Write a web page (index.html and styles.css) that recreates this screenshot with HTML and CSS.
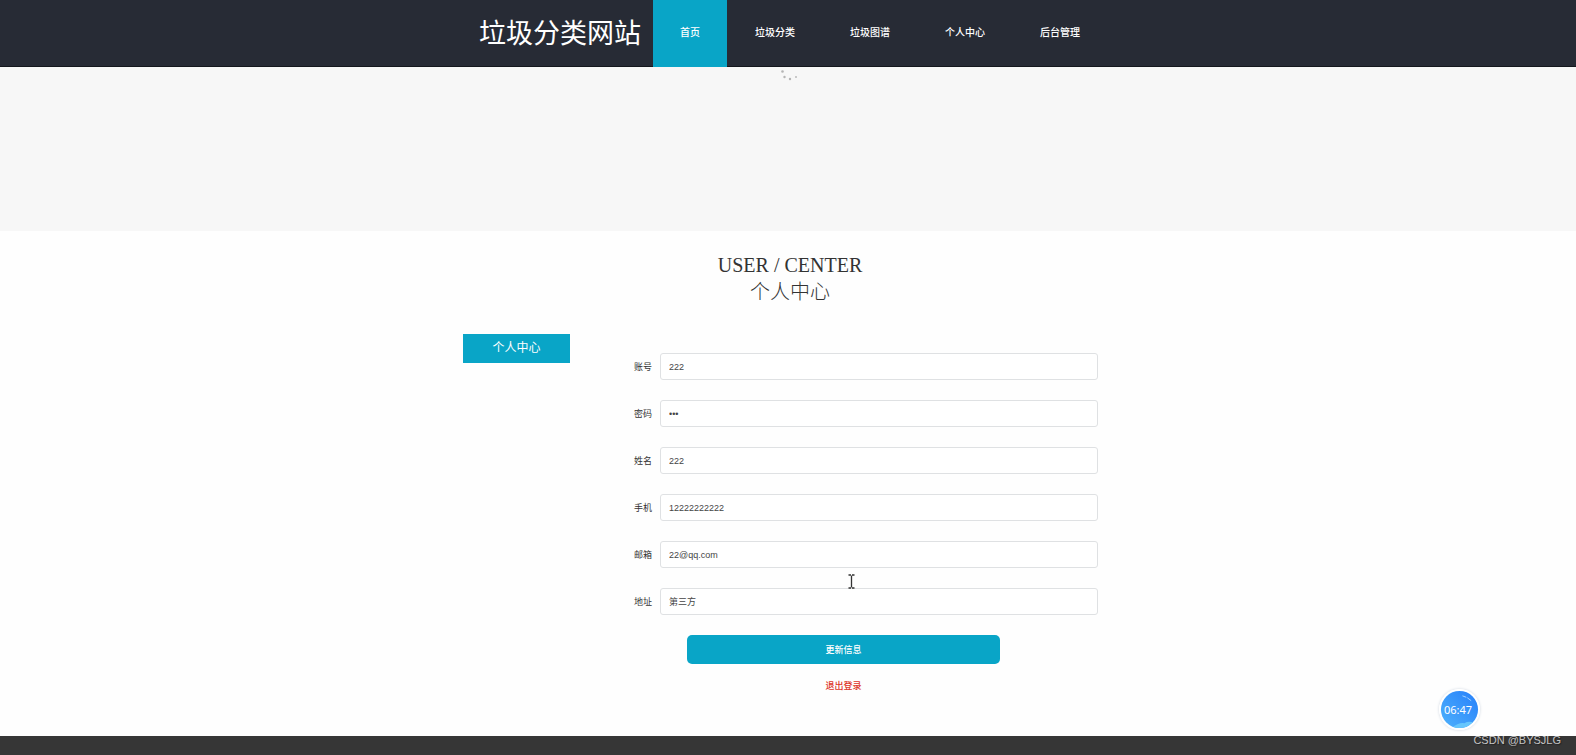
FILE: index.html
```html
<!DOCTYPE html>
<html lang="zh-CN">
<head>
<meta charset="utf-8">
<meta name="viewport" content="width=device-width, initial-scale=1">
<title>个人中心</title>
<link rel="stylesheet" href="styles.css">
</head>
<body>
<header class="header">
  <div class="container header-inner">
    <a class="logo" href="#">垃圾分类网站</a>
    <nav class="nav">
      <a class="nav-item active" href="#">首页</a>
      <a class="nav-item" href="#">垃圾分类</a>
      <a class="nav-item" href="#">垃圾图谱</a>
      <a class="nav-item" href="#">个人中心</a>
      <a class="nav-item" href="#">后台管理</a>
    </nav>
  </div>
</header>
<div class="banner">
  <svg class="spinner" width="20" height="14" viewBox="0 0 20 14" aria-hidden="true">
    <g fill="#b4b4b4">
      <circle cx="4.5" cy="4.5" r="1.3"/>
      <circle cx="6.5" cy="10" r="1.2"/>
      <circle cx="12" cy="12" r="1.2"/>
      <circle cx="18" cy="10" r="0.9"/>
    </g>
  </svg>
</div>
<main class="container main">
  <h1 class="title"><span>USER / CENTER</span><span class="title-cn">个人中心</span></h1>
  <div class="columns">
    <aside class="side"><a class="side-link" href="#">个人中心</a></aside>
    <form class="form">
      <div class="row"><label for="account">账号</label><input id="account" type="text" value="222"></div>
      <div class="row"><label for="password">密码</label><input id="password" type="password" value="222"></div>
      <div class="row"><label for="name">姓名</label><input id="name" type="text" value="222"></div>
      <div class="row"><label for="phone">手机</label><input id="phone" type="tel" value="12222222222"></div>
      <div class="row"><label for="email">邮箱</label><input id="email" type="email" value="22@qq.com"></div>
      <div class="row"><label for="address">地址</label><input id="address" type="text" value="第三方"></div>
      <div class="actions">
        <button class="submit" type="button">更新信息</button>
        <a class="logout" href="#">退出登录</a>
      </div>
    </form>
  </div>
</main>
<footer class="footer"></footer>
<div class="timer">
  <svg class="timer-art" viewBox="0 0 42 42" aria-hidden="true">
    <defs>
      <linearGradient id="ball" x1="0" y1="1" x2="1" y2="0">
        <stop offset="0" stop-color="#4fb2fc"/>
        <stop offset="1" stop-color="#267ffa"/>
      </linearGradient>
      <clipPath id="disc"><circle cx="21" cy="21" r="19"/></clipPath>
    </defs>
    <circle cx="21" cy="21" r="21" fill="#fff"/>
    <circle cx="21" cy="21" r="19" fill="url(#ball)"/>
    <path d="M13 40Q20 34 26 35Q31 32 36 35V42H13Z" fill="#66c6fc" clip-path="url(#disc)"/>
    <path d="M24 7l4 1.500M29 9l4 3" stroke="#a5d3ff" fill="none"/>
  </svg>
  <span class="timer-text">06:47</span>
</div>
<div class="watermark">CSDN @BYSJLG</div>
<svg class="cursor" width="7" height="15" viewBox="0 0 7 15" aria-hidden="true">
  <path d="M0.5 1H3M4 1H6.5M3.5 1.5V13.5M0.5 14H3M4 14H6.5" stroke="#333" stroke-width="1.3" fill="none"/>
</svg>
</body>
</html>
```
FILE: styles.css
```css
* { box-sizing: border-box; }

body {
  margin: 0;
  min-height: 100vh;
  display: flex;
  flex-direction: column;
  position: relative;
  background: #fefefe;
  color: #333;
  font: 9px/14px "Liberation Sans", "Noto Sans CJK SC", sans-serif;
}

a { text-decoration: none; }

.container {
  width: 100%;
  max-width: 650px;
  margin: 0 auto;
}

.header {
  background: #272b35;
  border-bottom: 1px solid #14171d;
}

.header-inner {
  display: flex;
  align-items: stretch;
  gap: 12px;
  padding-left: 16px;
}

.logo {
  padding-top: 2px;
  color: #fff;
  font-size: 27px;
  line-height: 64px;
  white-space: nowrap;
}

.nav { display: flex; gap: 1px; }

.nav-item {
  padding: 0 27px;
  color: #fff;
  font-size: 10px;
  font-weight: 500;
  line-height: 66px;
  white-space: nowrap;
}

.nav-item.active {
  background: #09a5c7;
  margin-bottom: -1px;
}

.banner {
  height: 164px;
  background: #f7f7f7;
  text-align: center;
}

.spinner { display: block; margin: 0 auto; }

.main { flex: 1; padding-bottom: 40px; }

.title {
  display: flex;
  flex-direction: column;
  align-items: center;
  margin: 21px 0 28px;
  padding-left: 4px;
  font: 400 20px/27px "Liberation Serif", "Noto Sans CJK SC", serif;
}

.title-cn { font-weight: 300; }

.columns {
  display: flex;
  gap: 64px;
}

.side { width: 107px; }

.side-link {
  display: block;
  background: #09a5c7;
  color: #fff;
  font-size: 12px;
  line-height: 29px;
  text-align: center;
}

.form {
  flex: 1;
  display: flex;
  flex-direction: column;
  gap: 20px;
  padding: 19px 15px 0 0;
}

.row {
  display: flex;
  align-items: center;
  gap: 8px;
}

.row input {
  flex: 1;
  min-width: 0;
  height: 27px;
  padding: 0 8px;
  border: 1px solid #dfe1e3;
  border-radius: 3px;
  background: #fff;
  color: #444;
  font: inherit;
}

.actions {
  display: flex;
  flex-direction: column;
  align-items: center;
  gap: 15px;
  padding-right: 45px;
}

.submit {
  width: 100%;
  max-width: 313px;
  height: 29px;
  border: 0;
  border-radius: 5px;
  background: #09a5c7;
  color: #fff;
  font: inherit;
  font-weight: 500;
}

.logout { color: #dd3528; font-weight: 500; }

.footer {
  height: 19px;
  background: #363636;
}

.timer {
  position: absolute;
  right: 96px;
  bottom: 25px;
  width: 41px;
  height: 41px;
  border-radius: 50%;
  box-shadow: 0 0 3px #cfd6e0;
}

.timer-art { display: block; }

.timer-text {
  position: absolute;
  inset: 0;
  padding-right: 3px;
  color: #fff;
  font: 11px/41px "Noto Sans", sans-serif;
  text-align: center;
}

.watermark {
  position: absolute;
  right: 15px;
  bottom: 8px;
  color: #c4c4c4;
  font-size: 11px;
  text-shadow: 1px 1px 1px #222;
}

.cursor {
  position: absolute;
  left: 848px;
  top: 574px;
}
```
